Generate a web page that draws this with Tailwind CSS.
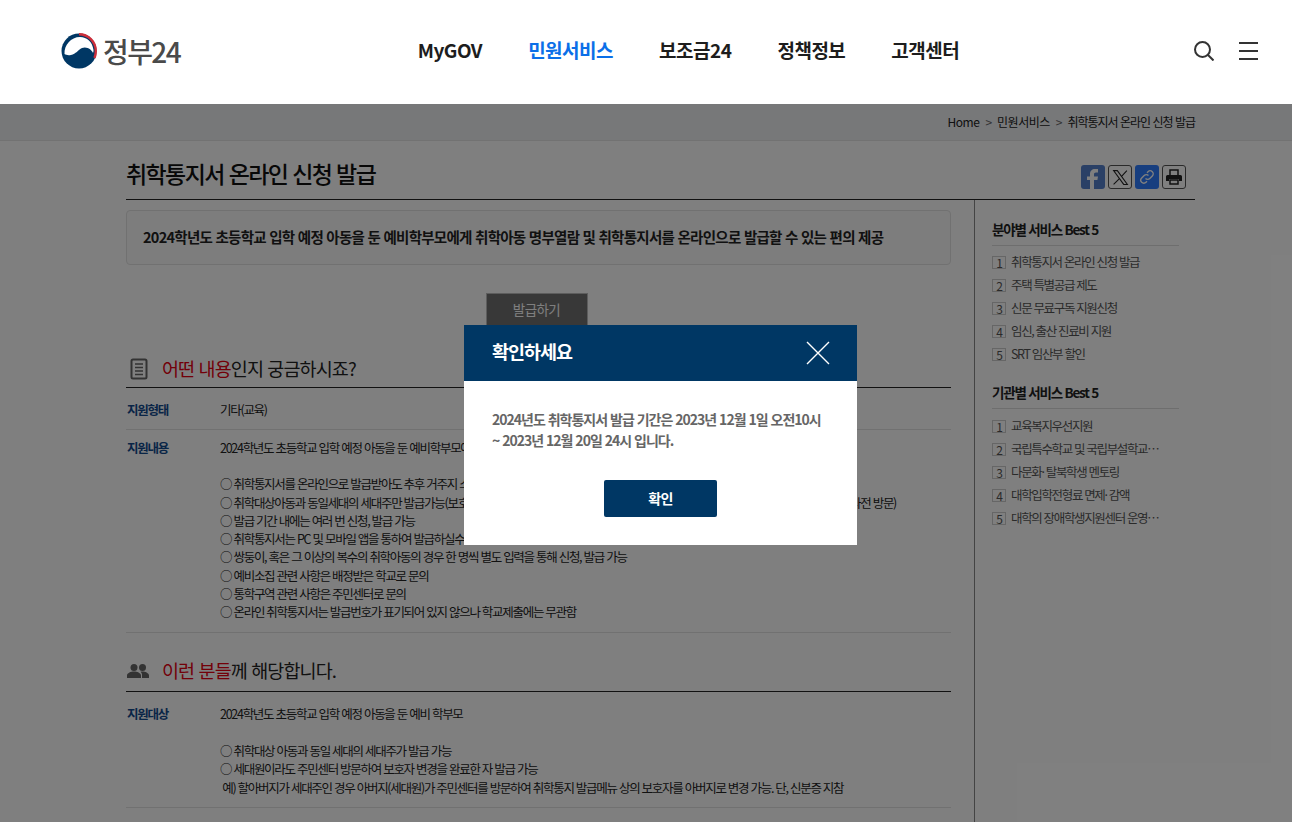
<!DOCTYPE html>
<html lang="ko">
  <head>
    <meta charset="UTF-8" />
    <title>취학통지서 온라인 신청 발급</title>
    <script src="https://cdn.jsdelivr.net/npm/@tailwindcss/browser@4"></script>
  </head>

  <body class="h-[822px] overflow-hidden bg-white font-['Noto_Sans_CJK_KR','Noto_Sans',sans-serif] text-[#222]">
    <!-- header -->
    <header class="relative z-30 flex h-[104px] items-center justify-between bg-white pr-[34px] pb-[2px] pl-[61px]">
      <div class="flex w-[356px] shrink-0 items-center gap-[6px]">
        <svg width="36" height="36" viewBox="0 0 36 36">
          <circle cx="18" cy="18" r="17.500" fill="#003764" />
          <path d="M3.500 21C3 12 10 4 19 4c7 0 12.500 5 13.500 13 .1 1 0 2-.5 3-1-3-6-7-11-5-4 2-6 6-11 7-3 .5-5 0-6.500-1z" fill="#fff" />
          <path d="M18 1.200c9.300 0 16.800 7.500 16.800 16.800 0 3-.5 5-1.300 7" fill="none" stroke="#cd2e3a" stroke-width="2.400" />
        </svg>
        <span class="text-[28px] leading-none font-medium tracking-[-1.600px] text-[#4a4a4a]">정부24</span>
      </div>
      <nav class="flex items-center gap-[46px] pb-[2px] text-[19px] font-bold tracking-[-0.5px] whitespace-nowrap text-[#1d1d1d]">
        <a>MyGOV</a>
        <a class="text-[#0b6fe8]">민원서비스</a>
        <a>보조금24</a>
        <a>정책정보</a>
        <a>고객센터</a>
      </nav>
      <div class="flex w-[298px] shrink-0 items-center justify-end gap-[25px]">
        <svg width="20" height="20" viewBox="0 0 20 20" fill="none" stroke="#333" stroke-width="2">
          <circle cx="8.500" cy="8.500" r="7.500" />
          <path d="M14 14l5.500 5.500" />
        </svg>
        <div class="flex h-[18px] w-[19px] flex-col justify-between">
          <span class="h-[2px] bg-[#333]"></span>
          <span class="h-[2px] bg-[#333]"></span>
          <span class="h-[2px] bg-[#333]"></span>
        </div>
      </div>
    </header>

    <div class="relative h-[718px] overflow-hidden">
      <!-- breadcrumb -->
      <div class="h-[37px] border-b border-[#e4e4e4] bg-[#eef0f3]">
        <div class="ml-[126px] flex h-[36px] w-[1069px] items-center justify-end gap-[6px] text-[12px] tracking-[-1px] text-[#222]">
          <span class="tracking-[-0.5px]">Home</span><span class="text-[#666]">&gt;</span><span class="tracking-[-0.5px]">민원서비스</span><span class="text-[#666]">&gt;</span><span>취학통지서 온라인 신청 발급</span>
        </div>
      </div>

      <div class="ml-[126px] w-[1069px]">
        <!-- page title -->
        <div class="flex h-[59px] items-end justify-between border-b border-[#222] pb-[9px]">
          <h1 class="text-[23px] leading-[34px] font-medium tracking-[-1.600px] text-[#111]">취학통지서 온라인 신청 발급</h1>
          <div class="mr-[9px] flex gap-[3px] pb-[1px]">
            <span class="flex h-[24px] w-[24px] items-end justify-center overflow-hidden rounded-[3px] bg-[#5580cc]">
              <svg width="14" height="21" viewBox="0 0 14 21"><path d="M4 21V12H1V8.500h3V6c0-3 2-5 5-5h3v3.500h-2c-1.500 0-2 .7-2 2v2h4l-.6 3.500H8v9z" fill="#fff" /></svg>
            </span>
            <span class="flex h-[24px] w-[24px] items-center justify-center rounded-[3px] border border-[#555] bg-white">
              <svg width="17" height="17" viewBox="0 0 16 16" fill="none" stroke="#222"><path d="M1.500 1.500h3.500l9.500 13H11z" /><path d="M14 1.500L9 7M7 9l-5.500 5.500" /></svg>
            </span>
            <span class="flex h-[24px] w-[24px] items-center justify-center rounded-[3px] bg-[#2f7cff]">
              <svg width="16" height="16" viewBox="0 0 16 16" fill="none" stroke="#fff" stroke-width="1.400"><path d="M6.500 9.500a3 3 0 004.300 0l2.500-2.500a3 3 0 00-4.300-4.300L8 3.700" /><path d="M9.500 6.500a3 3 0 00-4.300 0L2.700 9a3 3 0 004.300 4.300l1-1" /></svg>
            </span>
            <span class="flex h-[24px] w-[24px] items-center justify-center rounded-[3px] border border-[#555] bg-white">
              <svg width="18" height="16" viewBox="0 0 18 16"><path d="M5 6V1h8v5" fill="none" stroke="#222" stroke-width="1.500" /><path d="M1 7.500a1.500 1.500 0 011.500-1.500h13A1.500 1.500 0 0117 7.500V12h-3v-2H4v2H1z" fill="#222" /><path d="M5 11h8v4H5z" fill="none" stroke="#222" stroke-width="1.500" /></svg>
            </span>
          </div>
        </div>

        <div class="flex">
          <!-- main column -->
          <main class="w-[825px] pt-[10px]">
            <div class="flex h-[55px] items-center rounded-[4px] border border-[#e2e2e2] bg-[#fafafa] pb-[2px] pl-[16px] text-[14.500px] font-bold tracking-[-0.730px] text-[#222]">
              2024학년도 초등학교 입학 예정 아동을 둔 예비학부모에게 취학아동 명부열람 및 취학통지서를 온라인으로 발급할 수 있는 편의 제공
            </div>
            <div class="mt-[28px] flex justify-center">
              <button class="mr-[4px] h-[38px] w-[102px] border border-[#bbb] bg-[#707070] pb-[6px] text-[13.500px] tracking-[-0.6px] text-white">발급하기</button>
            </div>

            <div class="mt-[21px] flex h-[36px] items-center border-b border-[#222] pb-[2px]">
              <svg class="ml-[4px]" width="18" height="22" viewBox="0 0 18 22" fill="none" stroke="#666" stroke-width="2"><rect x="1.500" y="1.500" width="15" height="19" rx="1.500" /><path d="M5 6h8M5 9.500h8M5 13h8M5 16.500h8" stroke-width="1.300" /></svg>
              <h2 class="ml-[14px] text-[18.500px] tracking-[-0.900px] text-[#222]"><span class="text-[#e60012]">어떤 내용</span>인지 궁금하시죠?</h2>
            </div>
            <div class="flex border-b border-[#e2e2e2] pt-[13px] pb-[10px] text-[12.500px] leading-[18px] tracking-[-1.280px]">
              <div class="w-[94px] pl-[1px] font-bold text-[#134a8e]">지원형태</div>
              <div>기타(교육)</div>
            </div>
            <div class="flex border-b border-[#e2e2e2] pt-[9px] pb-[10px] text-[12.500px] leading-[18.300px] tracking-[-1.280px]">
              <div class="w-[94px] shrink-0 pl-[1px] font-bold text-[#134a8e]">지원내용</div>
              <div class="whitespace-nowrap">
                <p class="mb-[18px]">2024학년도 초등학교 입학 예정 아동을 둔 예비학부모에게 취학아동 명부열람 및 취학통지서를 온라인으로 발급할 수 있는 편의 제공</p>
                <p>○ 취학통지서를 온라인으로 발급받아도 추후 거주지 소재 확인 등을 위해 주민센터 방문이 필요할 수 있음</p>
                <p>○ 취학대상아동과 동일세대의 세대주만 발급가능(보호자가 세대주가 아닌 경우 세대주 변경후 발급가능하거나 보호자 변경을 위해 주민센터 사전 방문)</p>
                <p>○ 발급 기간 내에는 여러 번 신청, 발급 가능</p>
                <p>○ 취학통지서는 PC 및 모바일 앱을 통하여 발급하실수 있음</p>
                <p>○ 쌍둥이, 혹은 그 이상의 복수의 취학아동의 경우 한 명씩 별도 입력을 통해 신청, 발급 가능</p>
                <p>○ 예비소집 관련 사항은 배정받은 학교로 문의</p>
                <p>○ 통학구역 관련 사항은 주민센터로 문의</p>
                <p>○ 온라인 취학통지서는 발급번호가 표기되어 있지 않으나 학교제출에는 무관함</p>
              </div>
            </div>

            <div class="mt-[21px] flex h-[38px] items-center border-b border-[#222] pb-[2px]">
              <svg class="ml-[1px]" width="22" height="14" viewBox="0 0 22 14" fill="#666"><circle cx="7" cy="3.500" r="3.500" /><circle cx="15.500" cy="3.500" r="3.500" /><path d="M0 14v-2.500C0 9 4 7.500 7 7.500s7 1.500 7 4V14zM15 14v-3c0-1.300-.5-2.400-1.500-3.300.7-.2 1.400-.2 2-.2 2.500 0 6.500 1.500 6.500 4V14z" /></svg>
              <h2 class="ml-[13px] text-[18.500px] tracking-[-0.900px] text-[#222]"><span class="text-[#e60012]">이런 분들</span>께 해당합니다.</h2>
            </div>
            <div class="flex border-b border-[#e2e2e2] pt-[13px] pb-[10px] text-[12.500px] leading-[18.300px] tracking-[-1.280px]">
              <div class="w-[94px] shrink-0 pl-[1px] font-bold text-[#134a8e]">지원대상</div>
              <div class="whitespace-nowrap">
                <p class="mb-[19px]">2024학년도 초등학교 입학 예정 아동을 둔 예비 학부모</p>
                <p>○ 취학대상 아동과 동일 세대의 세대주가 발급 가능</p>
                <p>○ 세대원이라도 주민센터 방문하여 보호자 변경을 완료한 자 발급 가능</p>
                <p>&nbsp;예) 할아버지가 세대주인 경우 아버지(세대원)가 주민센터를 방문하여 취학통지 발급메뉴 상의 보호자를 아버지로 변경 가능. 단, 신분증 지참</p>
              </div>
            </div>
          </main>

          <!-- side column -->
          <aside class="ml-[23px] h-[640px] w-[221px] border-l border-[#888] pt-[20px] pr-[16px] pl-[17px]">
            <h3 class="border-b border-[#ddd] pb-[6px] text-[13.500px] leading-[19px] font-bold tracking-[-1.200px] text-[#222]">분야별 서비스 Best 5</h3>
            <ol class="mt-[5px] text-[12.500px] tracking-[-1.350px] text-[#555]">
              <li class="flex h-[23px] items-center"><span class="mr-[5px] flex h-[13px] w-[14px] items-center justify-center border border-[#ccc] text-[12px] leading-none">1</span>취학통지서 온라인 신청 발급</li>
              <li class="flex h-[23px] items-center"><span class="mr-[5px] flex h-[13px] w-[14px] items-center justify-center border border-[#ccc] text-[12px] leading-none">2</span>주택 특별공급 제도</li>
              <li class="flex h-[23px] items-center"><span class="mr-[5px] flex h-[13px] w-[14px] items-center justify-center border border-[#ccc] text-[12px] leading-none">3</span>신문 무료구독 지원신청</li>
              <li class="flex h-[23px] items-center"><span class="mr-[5px] flex h-[13px] w-[14px] items-center justify-center border border-[#ccc] text-[12px] leading-none">4</span>임신, 출산 진료비 지원</li>
              <li class="flex h-[23px] items-center"><span class="mr-[5px] flex h-[13px] w-[14px] items-center justify-center border border-[#ccc] text-[12px] leading-none">5</span>SRT 임산부 할인</li>
            </ol>
            <h3 class="mt-[17px] border-b border-[#ddd] pb-[6px] text-[13.500px] leading-[19px] font-bold tracking-[-1.200px] text-[#222]">기관별 서비스 Best 5</h3>
            <ol class="mt-[6px] text-[12.500px] tracking-[-1.350px] text-[#555]">
              <li class="flex h-[23px] items-center"><span class="mr-[5px] flex h-[13px] w-[14px] items-center justify-center border border-[#ccc] text-[12px] leading-none">1</span>교육복지우선지원</li>
              <li class="flex h-[23px] items-center"><span class="mr-[5px] flex h-[13px] w-[14px] items-center justify-center border border-[#ccc] text-[12px] leading-none">2</span>국립특수학교 및 국립부설학교⋯</li>
              <li class="flex h-[23px] items-center"><span class="mr-[5px] flex h-[13px] w-[14px] items-center justify-center border border-[#ccc] text-[12px] leading-none">3</span>다문화· 탈북학생 멘토링</li>
              <li class="flex h-[23px] items-center"><span class="mr-[5px] flex h-[13px] w-[14px] items-center justify-center border border-[#ccc] text-[12px] leading-none">4</span>대학입학전형료 면제· 감액</li>
              <li class="flex h-[23px] items-center"><span class="mr-[5px] flex h-[13px] w-[14px] items-center justify-center border border-[#ccc] text-[12px] leading-none">5</span>대학의 장애학생지원센터 운영⋯</li>
            </ol>
          </aside>
        </div>
      </div>

      <!-- dim layer -->
      <div class="absolute inset-0 z-10 bg-black/50"></div>

      <!-- modal -->
      <div class="absolute top-[221px] left-[464px] z-20 h-[220px] w-[393px] bg-white">
        <div class="flex h-[56px] items-center justify-between bg-[#003764] pr-[27px] pl-[28px]">
          <strong class="pb-[2px] text-[18.500px] font-bold tracking-[-1px] text-white">확인하세요</strong>
          <svg width="24" height="24" viewBox="0 0 24 24" fill="none" stroke="#fff" stroke-width="1.400"><path d="M1 1l22 22M23 1L1 23" /></svg>
        </div>
        <p class="px-[28px] pt-[28px] text-[14px] leading-[21px] font-bold tracking-[-1px] whitespace-nowrap text-[#666]">2024년도 취학통지서 발급 기간은 2023년 12월 1일 오전10시<br />~ 2023년 12월 20일 24시 입니다.</p>
        <div class="mt-[29px] flex justify-center">
          <button class="h-[37px] w-[113px] rounded-[2px] bg-[#003764] text-[14px] font-bold tracking-[-0.6px] text-white">확인</button>
        </div>
      </div>
    </div>
  </body>
</html>
